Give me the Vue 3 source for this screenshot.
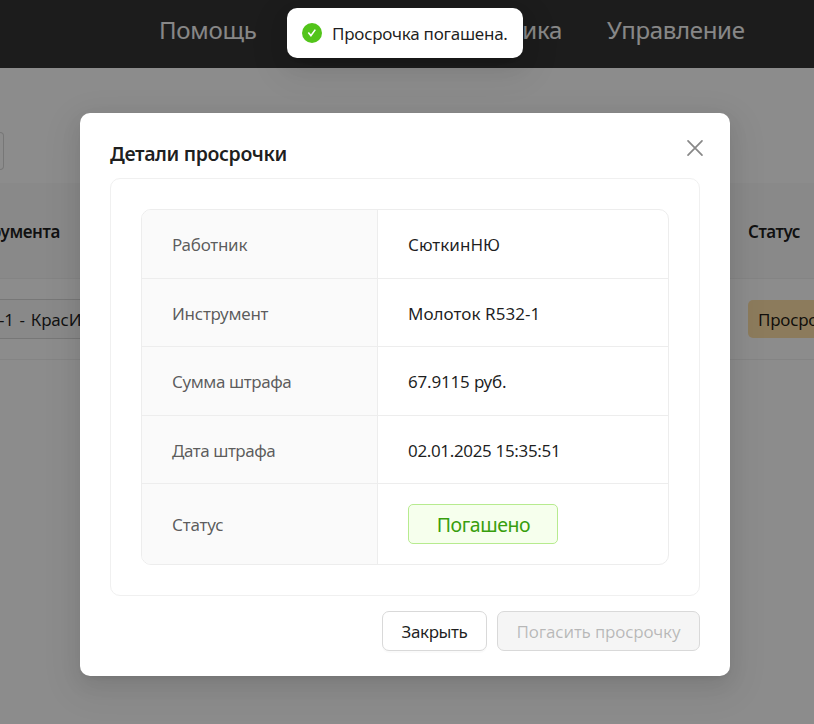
<script setup>
import { ref } from 'vue'

const details = ref([
  { label: 'Работник', value: 'СюткинНЮ', ls: -0.27, vs: 0.03 },
  { label: 'Инструмент', value: 'Молоток R532-1', ls: -0.26, vs: 0.04 },
  { label: 'Сумма штрафа', value: '67.9115 руб.', ls: -0.42, vs: -0.18 },
  { label: 'Дата штрафа', value: '02.01.2025 15:35:51', ls: -0.46, vs: -0.34 },
  { label: 'Статус', value: 'Погашено', tag: true, ls: -0.15, vs: -0.44 }
])
</script>

<template>
  <div class="screen">
    <header class="topbar">
      <nav class="nav">
        <a class="nav-item help">Помощь</a>
        <a class="nav-item stats">Статистика</a>
        <a class="nav-item manage">Управление</a>
      </nav>
    </header>

    <main class="content">
      <div class="toolbar"><div class="field"></div></div>
      <div class="grid-row head">
        <div class="cell-left"><span class="th tool">Наименование инструмента</span></div>
        <div class="cell-right"><span class="th">Статус</span></div>
      </div>
      <div class="grid-row">
        <div class="cell-left"><div class="chip"><span class="chip-text">-1 - КрасИнструмент</span></div></div>
        <div class="cell-right"><div class="state">Просрочено</div></div>
      </div>
    </main>

    <div class="mask">
      <section class="modal" role="dialog">
        <div class="modal-head">
          <h2 class="title">Детали просрочки</h2>
          <svg class="close" viewBox="0 0 18 18" width="18" height="18">
            <path d="M2 1.8 16 16.2M16 1.8 2 16.2" />
          </svg>
        </div>
        <div class="card">
          <div class="table">
            <div v-for="row in details" :key="row.label" class="row">
              <div class="label"><span :style="{ letterSpacing: row.ls + 'px' }">{{ row.label }}</span></div>
              <div class="value">
                <span :class="{ tag: row.tag }" :style="{ letterSpacing: row.vs + 'px' }">{{ row.value }}</span>
              </div>
            </div>
          </div>
        </div>
        <footer class="actions">
          <button class="btn btn-close">Закрыть</button>
          <button class="btn btn-pay" disabled>Погасить просрочку</button>
        </footer>
      </section>
    </div>

    <div class="toast">
      <svg class="ok" viewBox="0 0 20 20" width="20" height="20">
        <circle cx="10" cy="10" r="10" fill="#52c41a" />
        <path d="M6.3 9.6 8.9 12.6 13.3 6.6" fill="none" stroke="#fff" stroke-width="1.6" />
      </svg>
      <span class="toast-text">Просрочка погашена.</span>
    </div>
  </div>
</template>

<style>
body {
  margin: 0;
}
</style>

<style scoped>
.screen {
  position: relative;
  width: 814px;
  height: 724px;
  overflow: hidden;
  background: #fff;
  color: rgba(0, 0, 0, 0.88);
  font-family: 'Noto Sans', 'Open Sans', sans-serif;
  font-size: 17px;
  font-weight: 400;
  line-height: 28px;
}
.topbar {
  box-sizing: border-box;
  height: 68px;
  padding-left: 159px;
  background: #343434;
}
.nav {
  display: flex;
  align-items: center;
  height: 60px;
}
.nav-item {
  color: #f6f6f6;
  font-size: 24px;
  letter-spacing: -0.28px;
  white-space: nowrap;
}
.help {
  width: 144px;
}
.stats {
  width: 259px;
  text-align: right;
}
.manage {
  margin-left: 45px;
  letter-spacing: -0.32px;
}
.toolbar {
  height: 115px;
  display: flex;
  align-items: center;
}
.field {
  box-sizing: border-box;
  width: 4px;
  height: 38px;
  margin-top: 51px;
  border: 1px solid #d9d9d9;
  border-left: 0;
  border-radius: 0 7px 7px 0;
}
.grid-row {
  box-sizing: border-box;
  display: flex;
  align-items: center;
  height: 81px;
  border-bottom: 1px solid #f0f0f0;
}
.grid-row.head {
  height: 96px;
  padding-top: 2px;
  background: #fafafa;
}
.cell-left {
  width: 748px;
}
.cell-right {
  width: 66px;
  overflow: hidden;
}
.th {
  font-weight: 600;
  letter-spacing: -0.48px;
}
.tool {
  display: flex;
  justify-content: flex-end;
  width: 60px;
  letter-spacing: -0.4px;
  white-space: nowrap;
}
.chip {
  box-sizing: border-box;
  width: 240px;
  height: 40px;
  border: 1px solid #d9d9d9;
  border-left: 0;
  background: #fafafa;
  line-height: 39px;
  letter-spacing: -0.2px;
  word-spacing: 1.6px;
  white-space: nowrap;
}
.chip-text {
  margin-left: -1px;
}
.state {
  width: 130px;
  height: 38px;
  padding-left: 10px;
  border-radius: 5px;
  background: #ffe1a8;
  line-height: 39px;
  letter-spacing: -0.25px;
}
.mask {
  position: absolute;
  inset: 0;
  display: flex;
  justify-content: center;
  align-items: flex-start;
  padding-top: 113px;
  padding-right: 4px;
  background: rgba(0, 0, 0, 0.45);
}
.modal {
  box-sizing: border-box;
  width: 650px;
  height: 563px;
  padding: 25px 30px;
  border-radius: 10px;
  background: #fff;
  box-shadow: 0 7.5px 20px 0 rgba(0, 0, 0, 0.08), 0 4px 7.5px -5px rgba(0, 0, 0, 0.12), 0 11px 35px 10px rgba(0, 0, 0, 0.05);
}
.modal-head {
  display: flex;
  justify-content: space-between;
  height: 40px;
}
.title {
  margin: 2px 0 0;
  font-size: 19.5px;
  font-weight: 600;
  line-height: 28px;
  letter-spacing: -0.38px;
}
.close {
  margin: 1px -4px 0 0;
}
.close path {
  fill: none;
  stroke: #888;
  stroke-width: 1.7;
  stroke-linecap: round;
}
.card {
  box-sizing: border-box;
  height: 418px;
  padding: 30px;
  border: 1px solid #f0f0f0;
  border-radius: 10px;
}
.table {
  display: grid;
  grid-template-rows: 69px 68px 69px 68px 80px;
  border: 1px solid #ededed;
  border-radius: 10px;
  overflow: hidden;
}
.row {
  display: grid;
  grid-template-columns: 236px 1fr;
  border-bottom: 1px solid #ededed;
}
.row:last-child {
  border-bottom: 0;
}
.label,
.value {
  display: flex;
  align-items: center;
  padding-top: 2px;
  padding-left: 30px;
}
.row:last-child .value {
  padding-top: 0;
}
.label {
  border-right: 1px solid #ededed;
  background: #fafafa;
  color: rgba(0, 0, 0, 0.65);
}
.tag {
  box-sizing: border-box;
  width: 150px;
  height: 40px;
  padding-left: 1px;
  border: 1px solid #b7eb8f;
  border-radius: 5px;
  background: #f6ffed;
  color: #389e0d;
  font-size: 19.5px;
  line-height: 40px;
  text-align: center;
}
.actions {
  display: flex;
  justify-content: flex-end;
  gap: 10px;
  margin-top: 15px;
}
.btn {
  box-sizing: border-box;
  height: 40px;
  padding: 2px 0 0;
  border: 1px solid #d9d9d9;
  border-radius: 7px;
  background: #fff;
  color: inherit;
  font: inherit;
}
.btn-close {
  width: 105px;
  letter-spacing: -0.4px;
  box-shadow: 0 2px 0 rgba(0, 0, 0, 0.02);
}
.btn-pay {
  width: 203px;
  background: #f5f5f5;
  color: rgba(0, 0, 0, 0.25);
  letter-spacing: -0.18px;
}
.toast {
  position: absolute;
  top: 8px;
  left: 287px;
  box-sizing: border-box;
  display: flex;
  align-items: center;
  gap: 10px;
  width: 236px;
  height: 50px;
  padding-left: 15px;
  border-radius: 10px;
  background: #fff;
  letter-spacing: -0.25px;
  white-space: nowrap;
  box-shadow: 0 7.5px 20px 0 rgba(0, 0, 0, 0.08), 0 4px 7.5px -5px rgba(0, 0, 0, 0.12), 0 11px 35px 10px rgba(0, 0, 0, 0.05);
}
.toast-text {
  padding-top: 1px;
}
</style>
